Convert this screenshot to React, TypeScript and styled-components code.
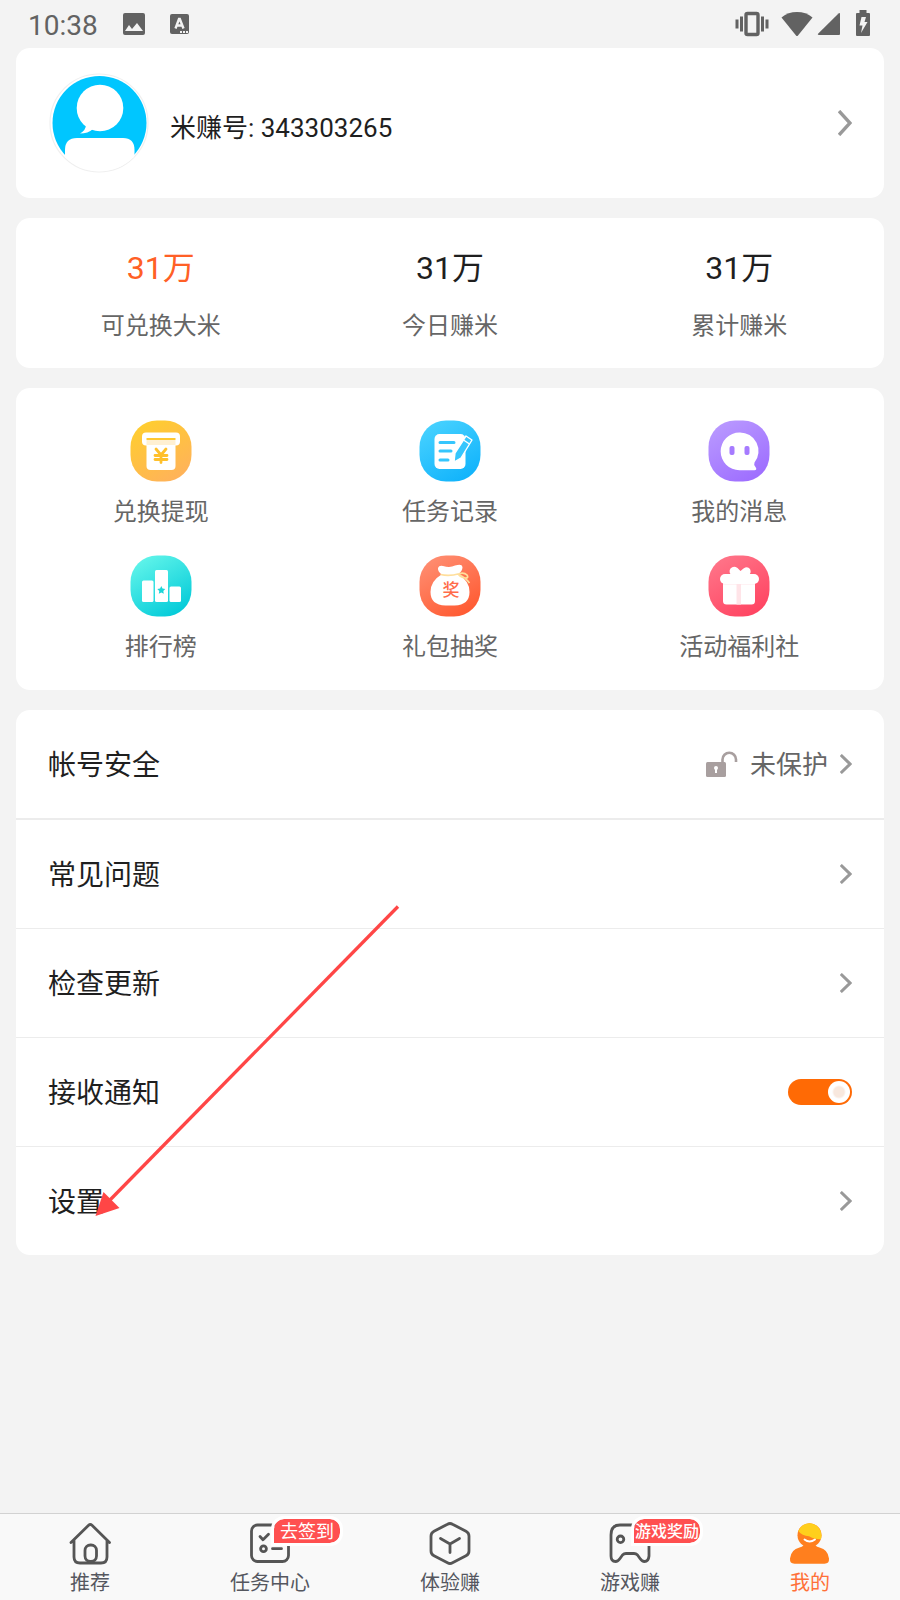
import React from 'react';
import styled, { createGlobalStyle } from 'styled-components';

const GlobalStyle = createGlobalStyle`
  * { box-sizing: border-box; }
  html, body { margin: 0; padding: 0; }
  body {
    background: #f3f3f3;
    color: #1f1f1f;
    font-family: Roboto, 'Noto Sans CJK SC', sans-serif;
  }
  button {
    margin: 0;
    padding: 0;
    border: 0;
    background: none;
    color: inherit;
    font: inherit;
    text-align: left;
    cursor: pointer;
  }
  a { color: inherit; text-decoration: none; }
  svg { display: block; flex: none; }
`;

const Page = styled.div`
  min-height: 100vh;
  display: flex;
  flex-direction: column;
`;

const StatusBar = styled.header`
  height: 48px;
  padding: 0 30px 0 28px;
  display: flex;
  align-items: center;
  justify-content: space-between;
  color: #626262;
`;

const StatusGroup = styled.div<{ $gap: number }>`
  display: flex;
  align-items: center;
  gap: ${(p) => p.$gap}px;
`;

const Clock = styled.time`
  font-size: 28px;
  line-height: 44px;
  padding-top: 4px;
`;

const Main = styled.main`
  flex: 1;
  padding: 0 16px 20px;
  display: flex;
  flex-direction: column;
  gap: 20px;
`;

const Card = styled.section`
  position: relative;
  background: #fff;
  border-radius: 14px;
`;

const ProfileButton = styled.button`
  width: 100%;
  height: 150px;
  padding: 0 32px;
  display: flex;
  align-items: center;
  gap: 20px;
`;

const ProfileName = styled.span`
  flex: 1;
  padding-top: 10px;
  font-size: 26px;
  line-height: 40px;
`;

const Stats = styled.dl`
  margin: 0;
  padding: 26px 0 24px;
  display: grid;
  grid-template-columns: repeat(3, 1fr);
`;

const Stat = styled.div`
  display: flex;
  flex-direction: column-reverse;
  align-items: center;
  gap: 16px;
`;

const StatValue = styled.dd<{ $accent?: boolean }>`
  margin: 0;
  font-size: 32px;
  line-height: 48px;
  color: ${(p) => (p.$accent ? '#ff6026' : '#1f1f1f')};
`;

const StatLabel = styled.dt`
  font-size: 24px;
  line-height: 36px;
  color: #666;
`;

const Tiles = styled.nav`
  padding: 32px 0 25px;
  display: grid;
  grid-template-columns: repeat(3, 1fr);
  row-gap: 25px;
`;

const Tile = styled.a`
  display: flex;
  flex-direction: column;
  align-items: center;
  gap: 12px;
  font-size: 24px;
  line-height: 36px;
  color: #666;
`;

const Glyph = styled.text`
  font-family: 'Noto Sans CJK SC', sans-serif;
  font-size: 17px;
  font-weight: 500;
  text-anchor: middle;
`;

const Rows = styled.ul`
  margin: 0;
  padding: 0;
  list-style: none;
`;

const Row = styled.li`
  & + & { border-top: 1px solid #ececec; }
  &:first-child { border-bottom: 1px solid #ececec; }
`;

const rowBody = `
  width: 100%;
  height: 108px;
  padding: 0 32px;
  display: flex;
  align-items: center;
  gap: 12px;
  font-size: 28px;
  line-height: 40px;
`;

const RowButton = styled.button`${rowBody}`;
const RowSetting = styled.label`${rowBody}`;

const RowTitle = styled.span`
  flex: 1;
  padding-top: 4px;
`;

const RowNote = styled.span`
  padding-top: 2px;
  font-size: 26px;
  color: #666;
`;

const Switch = styled.input`
  appearance: none;
  margin: 0;
  width: 64px;
  height: 26px;
  padding: 2px;
  border-radius: 13px;
  background: #ccc;
  display: flex;
  justify-content: flex-start;
  &:checked {
    background: #ff6a05;
    justify-content: flex-end;
  }
  &::after {
    content: '';
    width: 22px;
    height: 22px;
    border-radius: 50%;
    background: radial-gradient(circle, #f8e8de 0 5px, #fff 7px);
  }
`;

const Pointer = styled.svg`
  position: absolute;
  left: 78px;
  top: 194px;
  pointer-events: none;
`;

const TabBar = styled.nav`
  position: sticky;
  bottom: 0;
  display: grid;
  grid-template-columns: repeat(5, 1fr);
  border-top: 1px solid #d2d2d2;
  background: #f9f9f9;
`;

const Tab = styled.a<{ $active?: boolean }>`
  position: relative;
  padding: 8px 0 3px;
  display: flex;
  flex-direction: column;
  align-items: center;
  gap: 3px;
  font-size: 20px;
  line-height: 28px;
  color: ${(p) => (p.$active ? '#ff7038' : '#55575f')};
`;

const Badge = styled.span<{ $dense?: boolean }>`
  position: absolute;
  top: 2px;
  left: calc(50% + 1px);
  width: 72px;
  height: 30px;
  padding-top: 1px;
  border: 3px solid #fff;
  border-radius: 13px 13px 13px 0;
  background: #ff5050;
  background-clip: padding-box;
  color: #fff;
  font-size: ${(p) => (p.$dense ? 16 : 18)}px;
  font-weight: ${(p) => (p.$dense ? 500 : 400)};
  line-height: 24px;
  white-space: nowrap;
  display: flex;
  justify-content: center;
`;

const PictureIcon = () => (
  <svg width="24" height="24" viewBox="0 0 24 24" aria-hidden="true">
    <path fill="currentColor" fillRule="evenodd" d="M3 1h18a2 2 0 0 1 2 2v18a2 2 0 0 1-2 2H3a2 2 0 0 1-2-2V3a2 2 0 0 1 2-2zm0 18h18l-6-8-5 6-3-4z" />
  </svg>
);

const LetterIcon = () => (
  <svg width="20" height="22" viewBox="0 0 20 22" aria-hidden="true">
    <rect x="0" y="1" width="19" height="20" rx="2" fill="currentColor" />
    <path d="M5.500 15.500 9 6h.8l3.700 9.500M6.500 12.500h6" fill="none" stroke="#f3f3f3" strokeWidth="2.400" />
    <path d="M10 19h8" stroke="#f3f3f3" strokeWidth="1.800" strokeDasharray="2 1" />
  </svg>
);

const VibrateIcon = () => (
  <svg width="34" height="26" viewBox="0 0 34 26" fill="none" stroke="currentColor" aria-hidden="true">
    <rect x="11" y="2.500" width="12" height="21" rx="1.500" strokeWidth="3.400" />
    <path d="M6.500 5.500v15M27.500 5.500v15" strokeWidth="3" />
    <path d="M2 8.500v9M32 8.500v9" strokeWidth="3" />
  </svg>
);

const WifiIcon = () => (
  <svg width="32" height="26" viewBox="0 0 32 26" aria-hidden="true">
    <path fill="currentColor" d="M.5 6.500C5 2.800 10 1 16 1s11 1.800 15.500 5.500L17 24.500q-1 1-2 0z" />
  </svg>
);

const SignalIcon = () => (
  <svg width="24" height="24" viewBox="0 0 24 24" aria-hidden="true">
    <path fill="currentColor" d="M23 2v20q0 1-1 1H2q-2 0-.7-1.400L21.500 1.500Q23 .5 23 2z" />
  </svg>
);

const BatteryIcon = () => (
  <svg width="14" height="28" viewBox="0 0 14 28" aria-hidden="true">
    <path fill="currentColor" d="M3.500 0h7v3H13q1 0 1 1v21q0 1-1 1H1q-1 0-1-1V4q0-1 1-1h2.500z" />
    <path fill="#f3f3f3" d="M5.500 7h4.500L8.500 12h3L5 23l1.500-7.500H3.500z" />
  </svg>
);

const Avatar = () => (
  <svg width="102" height="102" viewBox="48 72 102 102" role="img" aria-label="头像">
    <defs>
      <clipPath id="face"><circle cx="99.500" cy="123" r="48.300" /></clipPath>
    </defs>
    <circle cx="99" cy="123" r="49" fill="#fff" stroke="#efefef" strokeWidth="1.200" />
    <circle cx="99.500" cy="123" r="47" fill="#00c6ff" />
    <circle cx="100" cy="108" r="23.300" fill="#fff" />
    <path fill="#fff" d="M86 125q0 5-6 8.500 8 0 13-4.500z" />
    <path clipPath="url(#face)" fill="#fff" d="M65 180v-30q0-12 12-12h46q11.500 0 11.500 12v30z" />
  </svg>
);

const Chevron = ({ large }: { large?: boolean }) =>
  large ? (
    <svg width="14" height="26" viewBox="0 0 14 26" fill="none" stroke="#999" strokeWidth="3.400" aria-hidden="true">
      <path d="M1 1 12 13 1 25" />
    </svg>
  ) : (
    <svg width="12" height="20" viewBox="0 0 12 20" fill="none" stroke="#999" strokeWidth="3" aria-hidden="true">
      <path d="M.8 1 10 10 .8 19" />
    </svg>
  );

const UnlockIcon = () => (
  <svg width="32" height="26" viewBox="0 0 32 26" aria-hidden="true">
    <rect x="0" y="11" width="20" height="15" rx="1.500" fill="#a89f9f" />
    <path d="M16.500 11V8.500a6.700 6.700 0 0 1 13.500 0V11" fill="none" stroke="#a89f9f" strokeWidth="2.600" />
    <circle cx="10" cy="17" r="2" fill="#fff" />
    <path d="M9 17h2v5H9z" fill="#fff" />
  </svg>
);

type TileArt = { id: string; from: string; to: string; children: React.ReactNode };

const TileIcon = ({ id, from, to, children }: TileArt) => (
  <svg width="62" height="62" viewBox="0 0 62 62" aria-hidden="true">
    <defs>
      <linearGradient id={id} x1="0.2" y1="0" x2="0.8" y2="1">
        <stop offset="0" stopColor={from} />
        <stop offset="1" stopColor={to} />
      </linearGradient>
    </defs>
    <rect x=".5" y=".5" width="61" height="61" rx="26.500" fill={`url(#${id})`} />
    {children}
  </svg>
);

const tiles: { label: string; art: TileArt }[] = [
  {
    label: '兑换提现',
    art: {
      id: 'cash', from: '#ffce2e', to: '#ffb15c',
      children: (
        <>
          <rect x="12" y="12.500" width="38" height="13" rx="4" fill="#fff" />
          <path d="M16.500 20h29v26q0 4-4 4h-21q-4 0-4-4z" fill="#fff" />
          <path d="M16.500 20h29v5h-29z" fill="#fff0d2" />
          <path d="M16.500 19h29" stroke="#ffc832" strokeWidth="2" />
          <path d="m26 29 5 6 5-6M31 35v7.500M25 35.500h12M25 39.500h12" fill="none" stroke="#ffc02c" strokeWidth="2.800" strokeLinecap="round" />
        </>
      ),
    },
  },
  {
    label: '任务记录',
    art: {
      id: 'record', from: '#48d2ff', to: '#0fb2fb',
      children: (
        <>
          <rect x="15.500" y="14" width="31" height="35" rx="5" fill="#fff" />
          <path d="M21 22.500h14M21 31h11M21 40h8" stroke="#35c6fd" strokeWidth="3" strokeLinecap="round" />
          <path d="m47 16 6 4-11 18-7 4 1-9z" fill="#35c6fd" stroke="#fff" strokeWidth="1.400" strokeLinejoin="round" />
          <path d="m44.500 20 6 4" stroke="#fff" strokeWidth="1.400" />
        </>
      ),
    },
  },
  {
    label: '我的消息',
    art: {
      id: 'message', from: '#b999ff', to: '#9d6cff',
      children: (
        <>
          <path d="M31.500 12.500a18.500 18.500 0 0 1 15 30q-1 2 1 4.500 2 3-1 3.200H31.500a18.800 18.800 0 0 1 0-37.700z" fill="#fff" />
          <rect x="21.500" y="26" width="5" height="9" rx="2" fill="#a67bff" />
          <rect x="36.500" y="26" width="5" height="9" rx="2" fill="#a67bff" />
        </>
      ),
    },
  },
  {
    label: '排行榜',
    art: {
      id: 'ranking', from: '#62f5ea', to: '#00c9d8',
      children: (
        <>
          <rect x="12" y="25.500" width="11.500" height="21.500" rx="1.500" fill="#fff" />
          <rect x="25" y="15" width="13" height="32" rx="1.500" fill="#fff" />
          <rect x="39.500" y="31.500" width="11.500" height="15.500" rx="1.500" fill="#fff" />
          <path d="m31.300 31 1.200 2.600 2.800.3-2 2 .5 2.900-2.500-1.400-2.500 1.400.5-2.900-2-2 2.800-.3z" fill="#1cd5d8" />
        </>
      ),
    },
  },
  {
    label: '礼包抽奖',
    art: {
      id: 'lottery', from: '#ff8e72', to: '#ff582f',
      children: (
        <>
          <path d="M19 13q1-3 5-2 7 2 12-.4 7-2.300 7.500 1.400 0 4-4.500 7.500 11.500 6 11.500 17.500 0 13-15 13.500h-9Q11.500 50 11.500 37q0-11 11-17.500-4-3.500-3.500-6.500z" fill="#fff" />
          <path d="M21.500 19.500q9 2 18.500-.8 5-1.700 8 1.300 2 3-1.500 3-4 0-7-3.500 7 3 11 8.500" fill="none" stroke="#ffdf9c" strokeWidth="1.700" />
          <Glyph x="32" y="41" fill="#ff6b49">奖</Glyph>
        </>
      ),
    },
  },
  {
    label: '活动福利社',
    art: {
      id: 'welfare', from: '#ff7589', to: '#ff4260',
      children: (
        <>
          <path d="M15 27h32v19q0 3.500-3.500 3.500h-25Q15 49.500 15 46z" fill="#fff" />
          <path d="M28.500 29h4.500v20.500h-4.500z" fill="#ffe4e8" />
          <path d="M15 28.500h32v1H15z" fill="#ffe4e8" />
          <rect x="12" y="19" width="39" height="10" rx="5" fill="#fff" />
          <path d="M24 21q-4-4-1.500-7.500 3-3 7-.5l3 3 3-2.500q4-2.500 6.500.5Q44 18 40 21z" fill="#fff" />
        </>
      ),
    },
  },
];

const stats = [
  { label: '可兑换大米', value: '31万', accent: true },
  { label: '今日赚米', value: '31万' },
  { label: '累计赚米', value: '31万' },
];

const TabIcon = ({ children }: { children: React.ReactNode }) => (
  <svg width="44" height="44" viewBox="0 0 44 44" fill="none" stroke="#555" strokeWidth="2.800" strokeLinecap="round" strokeLinejoin="round" aria-hidden="true">
    {children}
  </svg>
);

const HomeIcon = () => (
  <TabIcon>
    <path d="M3 20.500 20.600 3.300q1.700-1.600 3.400 0L41.500 20.500M6 18.500V35q0 6 6 6h21q6 0 6-6V18.500" />
    <rect x="17" y="23" width="11.500" height="16.500" rx="5.500" />
  </TabIcon>
);

const TaskIcon = () => (
  <TabIcon>
    <rect x="3.500" y="3" width="37" height="36.500" rx="6" />
    <path d="m12 14.500 3 3.300 5.500-5.500M24.500 26.700h9" />
    <circle cx="15.500" cy="26.700" r="2.900" />
  </TabIcon>
);

const CubeIcon = () => (
  <TabIcon>
    <path d="M19.500 2.200q2.500-1.400 5 0l13.500 7q3 1.600 3 4.800v15q0 3.200-3 4.800l-13.500 7q-2.500 1.400-5 0l-13.500-7q-3-1.600-3-4.800V14q0-3.200 3-4.800z" />
    <path d="M12.500 16.500 22 22l9.500-5.500M22 22v8.500" />
  </TabIcon>
);

const GameIcon = () => (
  <TabIcon>
    <path d="M12 3h20q9 0 9 10v21q-.5 5.500-4.500 5.500-2.500 0-4.500-3l-2.500-3.500q-1.500-1.500-3.500-1.500h-8q-2 0-3.500 1.500L12 36.500q-2 3-4.500 3-4.500 0-4.500-5.500V13Q3 3 12 3z" />
    <circle cx="12.500" cy="17.300" r="3.300" />
  </TabIcon>
);

const MeIcon = () => (
  <svg width="44" height="44" viewBox="0 0 44 44" aria-hidden="true">
    <path fill="#ff7f1e" d="M15.500 22h12v1.500q1.500 1.500 4 2 8.500 2 9.500 11 .4 5.200-4.500 5.200h-30Q1.600 41.700 2 36.500q1-9 9.500-11 2.500-.5 4-2z" />
    <circle cx="21.500" cy="13.300" r="12" fill="#ff7f1e" />
    <path fill="#ffcf1c" d="M10.300 9A12 12 0 0 1 33.500 13.300q0 2.200-.6 4-7.500-.2-11.900-3-7-.3-10.700-5.300z" />
    <path d="M16.500 17.500q5 4 10.500 0" fill="none" stroke="#fff" strokeWidth="1.900" strokeLinecap="round" />
  </svg>
);

const tabs = [
  { label: '推荐', icon: <HomeIcon /> },
  { label: '任务中心', icon: <TaskIcon />, badge: '去签到' },
  { label: '体验赚', icon: <CubeIcon /> },
  { label: '游戏赚', icon: <GameIcon />, badge: '游戏奖励', dense: true },
  { label: '我的', icon: <MeIcon />, active: true },
];

export default function App() {
  return (
    <Page>
      <GlobalStyle />
      <StatusBar>
        <StatusGroup $gap={24}>
          <Clock>10:38</Clock>
          <PictureIcon />
          <LetterIcon />
        </StatusGroup>
        <StatusGroup $gap={15}>
          <StatusGroup $gap={12}>
            <VibrateIcon />
            <StatusGroup $gap={4}>
              <WifiIcon />
              <SignalIcon />
            </StatusGroup>
          </StatusGroup>
          <BatteryIcon />
        </StatusGroup>
      </StatusBar>

      <Main>
        <Card>
          <ProfileButton type="button">
            <Avatar />
            <ProfileName>米赚号: 343303265</ProfileName>
            <Chevron large />
          </ProfileButton>
        </Card>

        <Card>
          <Stats>
            {stats.map((s) => (
              <Stat key={s.label}>
                <StatLabel>{s.label}</StatLabel>
                <StatValue $accent={s.accent}>{s.value}</StatValue>
              </Stat>
            ))}
          </Stats>
        </Card>

        <Card>
          <Tiles>
            {tiles.map((t) => (
              <Tile key={t.label} href="#">
                <TileIcon {...t.art} />
                {t.label}
              </Tile>
            ))}
          </Tiles>
        </Card>

        <Card>
          <Rows>
            <Row>
              <RowButton type="button">
                <RowTitle>帐号安全</RowTitle>
                <UnlockIcon />
                <RowNote>未保护</RowNote>
                <Chevron />
              </RowButton>
            </Row>
            <Row>
              <RowButton type="button">
                <RowTitle>常见问题</RowTitle>
                <Chevron />
              </RowButton>
            </Row>
            <Row>
              <RowButton type="button">
                <RowTitle>检查更新</RowTitle>
                <Chevron />
              </RowButton>
            </Row>
            <Row>
              <RowSetting>
                <RowTitle>接收通知</RowTitle>
                <Switch type="checkbox" role="switch" defaultChecked />
              </RowSetting>
            </Row>
            <Row>
              <RowButton type="button">
                <RowTitle>设置</RowTitle>
                <Chevron />
              </RowButton>
            </Row>
          </Rows>
          <Pointer width="308" height="316" viewBox="94 904 308 316" aria-hidden="true">
            <path d="M398 906.500 110 1200" stroke="#ff4646" strokeWidth="3.300" />
            <path d="m95.500 1216 8-24 16 16z" fill="#ff4646" />
          </Pointer>
        </Card>
      </Main>

      <TabBar>
        {tabs.map((t) => (
          <Tab key={t.label} href="#" $active={t.active} aria-current={t.active ? 'page' : undefined}>
            {t.icon}
            {t.label}
            {t.badge && <Badge $dense={t.dense}>{t.badge}</Badge>}
          </Tab>
        ))}
      </TabBar>
    </Page>
  );
}
